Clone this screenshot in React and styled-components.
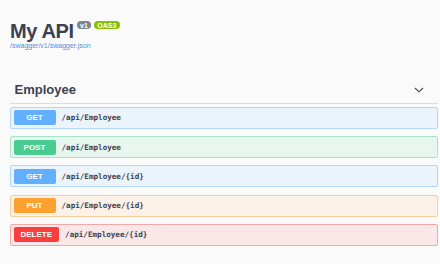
import React from 'react'
import styled, {createGlobalStyle} from 'styled-components'

const GlobalStyle = createGlobalStyle`
  html, body {
    margin: 0;
    padding: 0;
    background: #fafafa;
  }
  body {
    font-family: "Liberation Sans", Arial, sans-serif;
    color: #3b4151;
  }
`

const methods = {
    get: {color: '#61affe', bg: '#ebf3fb', border: '#b3d6fb'},
    post: {color: '#49cc90', bg: '#e8f6f0', border: '#a6e4c8'},
    put: {color: '#fca130', bg: '#fbf1e6', border: '#f9cf99'},
    delete: {color: '#f93e3e', bg: '#fae7e7', border: '#f1a8a8'},
}

const ops = [
    {method: 'get', path: '/api/Employee'},
    {method: 'post', path: '/api/Employee'},
    {method: 'get', path: '/api/Employee/{id}'},
    {method: 'put', path: '/api/Employee/{id}'},
    {method: 'delete', path: '/api/Employee/{id}'},
]

const App = () => {
    return (
        <Page>
            <GlobalStyle />
            <Info>
                <TitleRow>
                    <Title>My API</Title>
                    <Badge>v1</Badge>
                    <Badge green>OAS3</Badge>
                </TitleRow>
                <SpecLink>/swagger/v1/swagger.json</SpecLink>
            </Info>
            <Section>
                <TagHeader>
                    <TagName>Employee</TagName>
                    <svg width="10" height="6" viewBox="0 0 10 6">
                        <polyline points="1,1 5,4.8 9,1" fill="none" stroke="#3b4151" strokeWidth="1.1" />
                    </svg>
                </TagHeader>
                <Ops>
                    {ops.map((op, i) => (
                        <OpBlock key={i} m={methods[op.method]}>
                            <Method m={methods[op.method]}>{op.method.toUpperCase()}</Method>
                            <Path>{op.path}</Path>
                        </OpBlock>
                    ))}
                </Ops>
            </Section>
        </Page>
    )
}

const Page = styled.div`
    padding: 0 2px 0 10px;
    width: 428px;
`

const Info = styled.div`
    padding-top: 20px;
`

const TitleRow = styled.div`
    display: flex;
    align-items: flex-start;
    height: 22.4px;
`

const Title = styled.h2`
    margin: 2.3px 3px 0 0;
    font-size: 20px;
    line-height: 18px;
    font-weight: 700;
    letter-spacing: -0.4px;
    color: #3b4151;
`

const Badge = styled.span`
    margin-top: 0.7px;
    margin-right: 2.5px;
    height: 8.5px;
    line-height: 9px;
    padding: 0 3.5px;
    border-radius: 4.5px;
    background: ${props => (props.green ? '#89bf04' : '#7d8492')};
    color: #fff;
    font-size: 7px;
    font-weight: 700;
`

const SpecLink = styled.div`
    font-size: 7px;
    line-height: 8px;
    color: #4990e2;
`

const Section = styled.div`
    margin-top: 29.6px;
`

const TagHeader = styled.div`
    display: flex;
    align-items: center;
    justify-content: space-between;
    height: 20px;
    padding: 0 14px 3px 4.5px;
    border-bottom: 1px solid #dcdddf;
`

const TagName = styled.h3`
    margin: 0;
    font-size: 13px;
    line-height: 20px;
    font-weight: 700;
    color: #3b4151;
`

const Ops = styled.div`
    padding-top: 3px;
`

const OpBlock = styled.div`
    display: flex;
    align-items: center;
    box-sizing: border-box;
    height: 22px;
    margin-bottom: 7.25px;
    padding: 0 2.5px;
    border: 1px solid ${props => props.m.border};
    border-radius: 2px;
    background: ${props => props.m.bg};
`

const Method = styled.span`
    box-sizing: border-box;
    min-width: 42px;
    height: 15px;
    line-height: 15px;
    padding: 0 7px;
    border-radius: 2px;
    background: ${props => props.m.color};
    color: #fff;
    font-size: 8px;
    font-weight: 700;
    text-align: center;
`

const Path = styled.span`
    margin-left: 6px;
    font-family: "DejaVu Sans Mono", "Liberation Mono", monospace;
    font-size: 7.6px;
    font-weight: 700;
    color: #3b4151;
`

export default App
